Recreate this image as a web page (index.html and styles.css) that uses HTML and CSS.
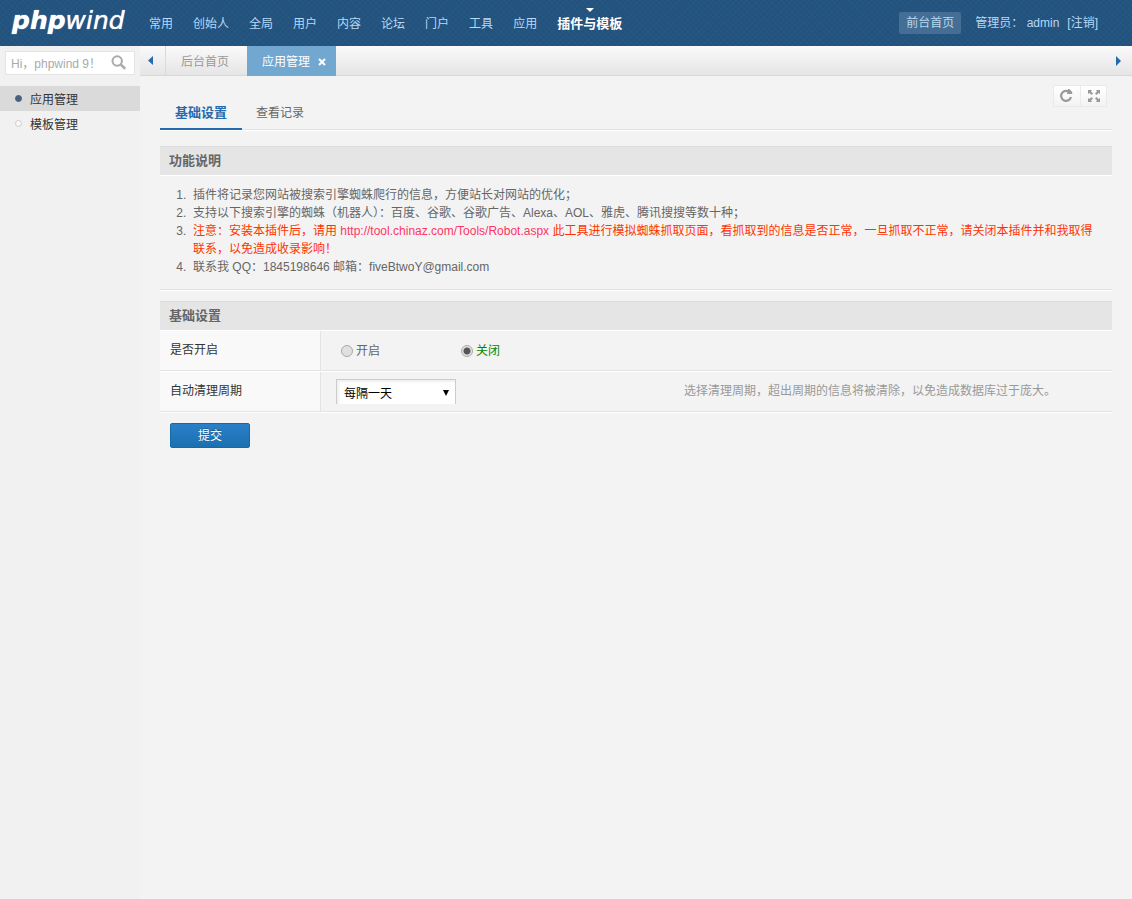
FILE: index.html
```html
<!DOCTYPE html>
<html lang="zh-CN">
<head>
<meta charset="utf-8">
<title>phpwind</title>
<link rel="stylesheet" href="styles.css">
</head>
<body>
<header class="head">
  <a class="logo" href="#"><span class="logo-bold">php</span><span>wind</span></a>
  <nav class="nav">
    <a href="#">常用</a><a href="#">创始人</a><a href="#">全局</a><a href="#">用户</a><a href="#">内容</a><a href="#">论坛</a><a href="#">门户</a><a href="#">工具</a><a href="#">应用</a><a class="current" href="#">插件与模板</a>
  </nav>
  <div class="login">
    <a class="home" href="#">前台首页</a>
    <div class="user"><span>管理员： admin</span><a href="#">[注销]</a></div>
  </div>
</header>
<div class="body">
  <aside class="side">
    <form class="search">
      <input type="text" aria-label="搜索" placeholder="Hi，phpwind 9！">
      <button type="button" aria-label="搜索"><svg width="16" height="16" viewBox="0 0 16 16"><circle cx="6.2" cy="6" r="4.7" fill="none" stroke="#aaa" stroke-width="2"/><path d="M9.8 9.6l4.4 4.2" stroke="#aaa" stroke-width="2.6"/></svg></button>
    </form>
    <ul class="menu">
      <li class="current"><a href="#">应用管理</a></li>
      <li><a href="#">模板管理</a></li>
    </ul>
  </aside>
  <main class="main">
    <div class="tabs">
      <button class="arrow prev" type="button" aria-label="上一个"><svg width="6" height="10" viewBox="0 0 6 10"><path d="M5 0v9L0 4.500z" fill="#266aae"/></svg></button>
      <a class="tab" href="#">后台首页</a>
      <a class="tab current" href="#">应用管理<svg width="8" height="8" viewBox="0 0 8 8"><path d="M1 1l6 6M7 1L1 7" stroke="#fff" stroke-width="2"/></svg></a>
      <button class="arrow next" type="button" aria-label="下一个"><svg width="6" height="10" viewBox="0 0 6 10"><path d="M0 0v10l5-5z" fill="#266aae"/></svg></button>
    </div>
    <div class="content">
      <div class="tools">
        <button type="button" aria-label="刷新"><svg width="14" height="14" viewBox="0 0 14 14"><path d="M9.600 3.200A5 5 0 1 0 11 8" fill="none" stroke="#999" stroke-width="2.200"/><path d="M8 0l1.200 0 3 3v2H7z" fill="#999"/></svg></button>
        <button type="button" aria-label="全屏"><svg width="12" height="12" viewBox="0 0 12 12"><path d="M0 0h4L3 1.500 5 3.500 3.500 5 1.500 3 0 4zM12 0v4l-1.500-1L8.500 5 7 3.500 9 1.500 8 0zM0 12V8l1.500 1L3.500 7 5 8.500 3 10.500 4 12zM12 12H8l1-1.500L7 8.500 8.500 7l2 2L12 8z" fill="#999"/></svg></button>
      </div>
      <nav class="subnav"><a class="current" href="#">基础设置</a><a href="#">查看记录</a></nav>
      <h2 class="title">功能说明</h2>
      <ol class="notes">
        <li>插件将记录您网站被搜索引擎蜘蛛爬行的信息，方便站长对网站的优化；</li>
        <li>支持以下搜索引擎的蜘蛛（机器人）：百度、谷歌、谷歌广告、Alexa、AOL、雅虎、腾讯搜搜等数十种；</li>
        <li class="warn">注意：安装本插件后，请用 <a href="#">http://tool.chinaz.com/Tools/Robot.aspx</a> 此工具进行模拟蜘蛛抓取页面，看抓取到的信息是否正常，一旦抓取不正常，请关闭本插件并和我取得联系，以免造成收录影响！</li>
        <li>联系我 QQ：1845198646 邮箱：fiveBtwoY@gmail.com</li>
      </ol>
      <h2 class="title">基础设置</h2>
      <form>
        <div class="rows">
          <div class="row">
            <div class="label">是否开启</div>
            <div class="field radios">
              <label><input type="radio" name="open"><span>开启</span></label>
              <label><input type="radio" name="open" checked><span>关闭</span></label>
            </div>
          </div>
          <div class="row">
            <label class="label" for="cycle">自动清理周期</label>
            <div class="field"><div class="select"><select id="cycle"><option>每隔一天</option></select></div></div>
            <div class="tip">选择清理周期，超出周期的信息将被清除，以免造成数据库过于庞大。</div>
          </div>
        </div>
        <button class="submit" type="button">提交</button>
      </form>
    </div>
  </main>
</div>
</body>
</html>
```

FILE: styles.css
```css
* { box-sizing: border-box; }
body { margin: 0; min-height: 100vh; display: flex; flex-direction: column; background: #f3f3f3; color: #666; font: 12px/18px "Liberation Sans", "Noto Sans CJK SC", sans-serif; }
a { color: inherit; text-decoration: none; }
button, input, select { font: inherit; margin: 0; }
button { cursor: pointer; padding: 0; border: 0; background: none; }
ul, ol, h2 { margin: 0; padding: 0; }

.head { display: flex; height: 46px; align-items: center; color: #b8d8f3; background-color: #22527e; background-image: repeating-linear-gradient(45deg, #ffffff05 0 1px, transparent 1px 4px), repeating-linear-gradient(-45deg, #ffffff05 0 1px, transparent 1px 4px); }
.logo { width: 139px; padding: 0 0 4px 12px; color: #fff; font: italic 25px/38px "DejaVu Sans", sans-serif; text-shadow: 0 0 1px #fff; white-space: nowrap; }
.logo-bold { font-weight: bold; }
.nav { display: flex; flex: 1; padding-top: 2px; }
.nav a { position: relative; padding: 0 10px; white-space: nowrap; }
.nav .current { color: #fff; font-size: 13px; font-weight: bold; }
.nav .current::before { content: ""; position: absolute; top: -7px; left: 50%; margin-left: -4px; border: 4px solid transparent; border-top-color: #fff; border-bottom: 0; }
.login { display: flex; align-items: center; gap: 14px; padding-right: 34px; white-space: nowrap; }
.user { display: flex; gap: 8px; }
.home { padding: 2px 7px; background: #456e94; border-radius: 2px; }

.body { display: flex; flex: 1; }
.side { width: 140px; background: #f1f1f1; }
.search { display: flex; align-items: center; height: 24px; margin: 5px 5px 11px; background: #fff; border: 1px solid #e4e4e4; }
.search input { flex: 1; min-width: 0; padding: 1px 0 0 5px; border: 0; outline: 0; background: none; }
.search input::placeholder { color: #aaa; }
.search button { width: 24px; height: 16px; padding-left: 1px; }
.search svg { display: block; }
.menu { list-style: none; color: #333; }
.menu li { display: flex; align-items: center; height: 25px; padding-left: 15px; gap: 8px; }
.menu li::before { content: ""; box-sizing: border-box; width: 7px; height: 7px; border: 1px solid #ccc; border-radius: 50%; background: #f8f8f8; }
.menu a { padding-top: 2px; }
.menu .current { background: #dadada; }
.menu .current::before { background: #47627e; border-color: #47627e; }

.main { flex: 1; min-width: 0; }
.tabs { display: flex; height: 30px; background: linear-gradient(#fafafa, #e5e5e5); border-bottom: 1px solid #d8d8d8; }
.arrow { width: 26px; display: flex; align-items: center; padding-left: 8px; }
.prev { border-right: 1px solid #dadada; }
.next { margin-left: auto; width: 24px; }
.tab { display: flex; align-items: center; padding: 2px 15px 0; color: #999; }
.tab.current { height: 30px; gap: 8px; padding: 1px 10px 0 15px; color: #fff; background: #72a7d0; margin-left: 3px; }
.content { position: relative; padding: 18px 20px; }
.tools { position: absolute; top: 9px; right: 25px; display: flex; border: 1px solid #eaeaea; background: linear-gradient(#fff, #f3f3f3); }
.tools button { display: flex; align-items: center; justify-content: center; width: 26px; height: 20px; }
.tools button + button { border-left: 1px solid #eaeaea; }
.subnav { display: flex; height: 36px; margin-bottom: 16px; border-bottom: 1px solid #e3e3e3; box-shadow: 0 1px #fff; }
.subnav a { height: 36px; padding: 10px 14px 0; }
.subnav .current { padding: 10px 15px 0; color: #266aae; font-size: 13px; font-weight: bold; border-bottom: 2px solid #266aae; }
.title { height: 30px; padding: 5px 9px; background: #e5e5e5; border-top: 1px solid #ddd; border-bottom: 1px solid #fff; font-size: 13px; line-height: 18px; }
.notes { margin-bottom: 11px; padding: 10px 15px 13px 33px; border-bottom: 1px solid #e3e3e3; box-shadow: 0 1px #fff; }
.notes li::marker { content: counter(list-item) ".\00a0\00a0"; color: #666; }
.warn { color: #f30; }
.warn a { color: #f36; }
.rows { border-bottom: 1px solid #fff; }
.row { display: flex; min-height: 40px; border-bottom: 1px solid #e3e3e3; }
.row + .row { border-top: 1px solid #fff; min-height: 41px; }
.label { width: 161px; padding: 10px; background: #f9f9f9; border-right: 1px solid #e3e3e3; color: #333; }
.field { flex: 1; padding: 7px 15px; }
.radios { display: flex; padding: 11px 20px 10px; }
.radios label { display: flex; align-items: center; width: 120px; gap: 3px; }
.radios input { appearance: none; width: 12px; height: 12px; border: 1px solid #aaa; border-radius: 50%; background: #e0e0e0; }
.radios input:checked { background: radial-gradient(circle, #555 0 3px, #e2e2e2 4px); }
.radios input:checked + span { color: #080; }
.select { position: relative; width: 120px; }
.select::after { content: ""; position: absolute; right: 7px; top: 11px; border: 3px solid transparent; border-top: 6px solid #000; border-bottom: 0; pointer-events: none; }
.select select { display: block; appearance: none; width: 100%; height: 25px; padding: 4px 7px 0; border: 1px solid #ccc; border-bottom: 0; border-radius: 0; background: #fff; color: #000; box-shadow: inset 2px 2px 2px #f0f0f0; }
.tip { width: 428px; padding: 10px 0; color: #999; }
.submit { display: block; width: 80px; height: 25px; margin: 10px; color: #fff; background: linear-gradient(#2a80c8, #1b70b0); border: 1px solid #106bab; border-radius: 2px; text-shadow: 0 -1px #0004; }
```
